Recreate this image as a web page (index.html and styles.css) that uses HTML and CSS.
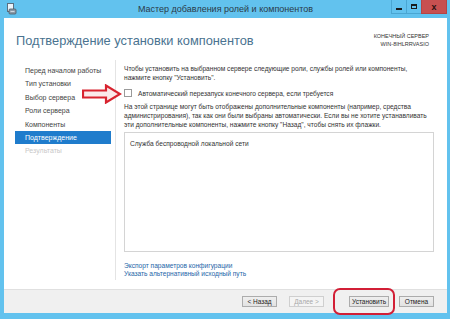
FILE: index.html
```html
<!DOCTYPE html>
<html lang="ru">
<head>
  <meta charset="UTF-8" />
  <title>Мастер добавления ролей и компонентов</title>
  <link rel="stylesheet" href="styles.css">
</head>
<body>
  <div class="window">
    <div class="titlebar">
      <svg class="app-icon" width="11" height="12" viewBox="0 0 11 12">
        <rect x="1.5" y="0.5" width="6" height="8" fill="#eaf4fb" stroke="#5b6f80" />
        <rect x="3" y="6" width="7" height="5" rx="1" fill="#8a9aa8" stroke="#4b5a66" stroke-width="0.8" />
        <line x1="4.5" y1="8.5" x2="8.5" y2="8.5" stroke="#dfe7ee" stroke-width="0.8" />
      </svg>
      <div class="title">Мастер добавления ролей и компонентов</div>
      <div class="controls">
        <div class="ctl ctl-min"><span class="glyph-min"></span></div>
        <div class="ctl ctl-max"><span class="glyph-max"></span></div>
        <div class="ctl ctl-close">x</div>
      </div>
    </div>

    <div class="client">
      <div class="header">
        <h1>Подтверждение установки компонентов</h1>
        <div class="target">
          <div>КОНЕЧНЫЙ СЕРВЕР</div>
          <div>WIN-8IHLRRVASIO</div>
        </div>
      </div>

      <div class="main">
        <ul class="nav">
          <li>Перед началом работы</li>
          <li>Тип установки</li>
          <li>Выбор сервера</li>
          <li>Роли сервера</li>
          <li>Компоненты</li>
          <li class="active">Подтверждение</li>
          <li class="disabled">Результаты</li>
        </ul>

        <div class="content">
          <p class="intro">Чтобы установить на выбранном сервере следующие роли, службы ролей или компоненты,<br>нажмите кнопку "Установить".</p>

          <label class="check-row">
            <span class="checkbox"></span>
            <span>Автоматический перезапуск конечного сервера, если требуется</span>
          </label>

          <p class="note">На этой странице могут быть отображены дополнительные компоненты (например, средства<br>администрирования), так как они были выбраны автоматически. Если вы не хотите устанавливать<br>эти дополнительные компоненты, нажмите кнопку "Назад", чтобы снять их флажки.</p>

          <div class="feature-box">Служба беспроводной локальной сети</div>

          <div class="links">
            <a href="#">Экспорт параметров конфигурации</a>
            <a href="#">Указать альтернативный исходный путь</a>
          </div>
        </div>
      </div>

      <div class="footer">
        <button class="btn">&lt; Назад</button>
        <button class="btn" disabled>Далее &gt;</button>
        <button class="btn btn-install">Установить</button>
        <button class="btn">Отмена</button>
      </div>
    </div>
  </div>

  <svg class="red-arrow" width="40" height="20" viewBox="0 0 40 20">
    <polygon points="1,6.5 24,6.5 24,1.5 38,10 24,18.5 24,13.5 1,13.5" fill="#fbe9ea" stroke="#d8232f" stroke-width="2.2" stroke-linejoin="miter" />
  </svg>
  <div class="red-ring"></div>
</body>
</html>
```

FILE: styles.css
```css
*, *::before, *::after {
  box-sizing: border-box;
}

html, body {
  margin: 0;
  padding: 0;
}

body {
  width: 450px;
  height: 319px;
  overflow: hidden;
  position: relative;
  background: #62c2ee;
  font-family: "Liberation Sans", Arial, sans-serif;
  color: #333;
}

.window {
  height: 319px;
  display: flex;
  flex-direction: column;
  padding: 0 3px 6px 4px;
}

.titlebar {
  height: 18px;
  display: flex;
  align-items: flex-start;
  position: relative;
}

.app-icon {
  margin: 3px 0 0 2px;
}

.title {
  position: absolute;
  left: 0;
  right: 0;
  top: 4px;
  text-align: center;
  font-size: 9px;
  color: #2a3a48;
}

.controls {
  margin-left: auto;
  display: flex;
}

.ctl {
  height: 14px;
  width: 16px;
  display: flex;
  align-items: center;
  justify-content: center;
  border: 1px solid #4aa6d2;
  border-top: none;
  margin-left: -1px;
}

.glyph-min {
  width: 6px;
  height: 2px;
  background: #1a1a1a;
  margin-top: 4px;
}

.glyph-max {
  width: 6px;
  height: 5px;
  border: 1px solid #1a1a1a;
  border-top-width: 2px;
}

.ctl-close {
  width: 26px;
  background: #c75050;
  border-color: #b54444;
  color: #2a1010;
  font-size: 9px;
  font-weight: bold;
}

.client {
  flex: 1;
  background: #fff;
  display: flex;
  flex-direction: column;
}

.header {
  height: 42px;
  display: flex;
  justify-content: space-between;
  padding: 0 18px 0 12px;
}

h1 {
  margin: 15px 0 0 0;
  font-size: 12.8px;
  font-weight: normal;
  color: #4a7390;
}

.target {
  margin-top: 14px;
  text-align: right;
  font-size: 5.5px;
  line-height: 8px;
  color: #333;
}

.main {
  height: 220px;
  display: flex;
}

.nav {
  list-style: none;
  margin: 0;
  padding: 4px 4px 0 11px;
  width: 112px;
  border-right: 1px solid #e4e4e4;
  font-size: 7px;
}

.nav li {
  height: 13.4px;
  line-height: 13.4px;
  padding-left: 10px;
  color: #444;
  white-space: nowrap;
}

.nav li.active {
  background: #1f7ccc;
  color: #fff;
}

.nav li.disabled {
  color: #c8c8c8;
}

.content {
  flex: 1;
  padding: 4px 13px 0 8px;
  font-size: 6.6px;
  white-space: nowrap;
}

.intro {
  margin: 0;
  line-height: 9.2px;
}

.check-row {
  display: flex;
  align-items: center;
  height: 10px;
  margin-top: 5.6px;
}

.checkbox {
  width: 8px;
  height: 8px;
  border: 1px solid #9a9a9a;
  background: #fff;
  margin-right: 6px;
}

.note {
  margin: 3.5px 0 0 0;
  line-height: 9px;
}

.feature-box {
  margin-top: 3px;
  height: 120px;
  border: 1px solid #d4d4d4;
  padding: 6.5px 5px;
  line-height: 9px;
}

.links {
  margin-top: 10px;
  display: flex;
  flex-direction: column;
}

.links a {
  color: #2566a8;
  text-decoration: none;
  line-height: 8.7px;
}

.footer {
  margin-top: 9px;
  flex: 1;
  background: #f0f0f0;
  border-top: 1px solid #e0e0e0;
  display: flex;
  justify-content: flex-end;
  align-items: center;
  padding: 0 13px 0 0;
}

.btn {
  height: 11px;
  width: 35px;
  margin-left: 12px;
  padding: 0;
  font-family: "Liberation Sans", Arial, sans-serif;
  font-size: 6.5px;
  color: #222;
  background: linear-gradient(#efefef, #e2e2e2);
  border: 1px solid #acacac;
  border-radius: 0;
}

.btn[disabled] {
  color: #a8a8a8;
  border-color: #cfcfcf;
  background: #f4f4f4;
}

.btn-install {
  width: 40px;
  margin-left: 25px;
  margin-right: -2px;
}

.red-arrow {
  position: absolute;
  left: 82px;
  top: 84px;
}

.red-ring {
  position: absolute;
  left: 333px;
  top: 288px;
  width: 62px;
  height: 27px;
  border: 2px solid #d21f36;
  border-radius: 7px;
}
```
